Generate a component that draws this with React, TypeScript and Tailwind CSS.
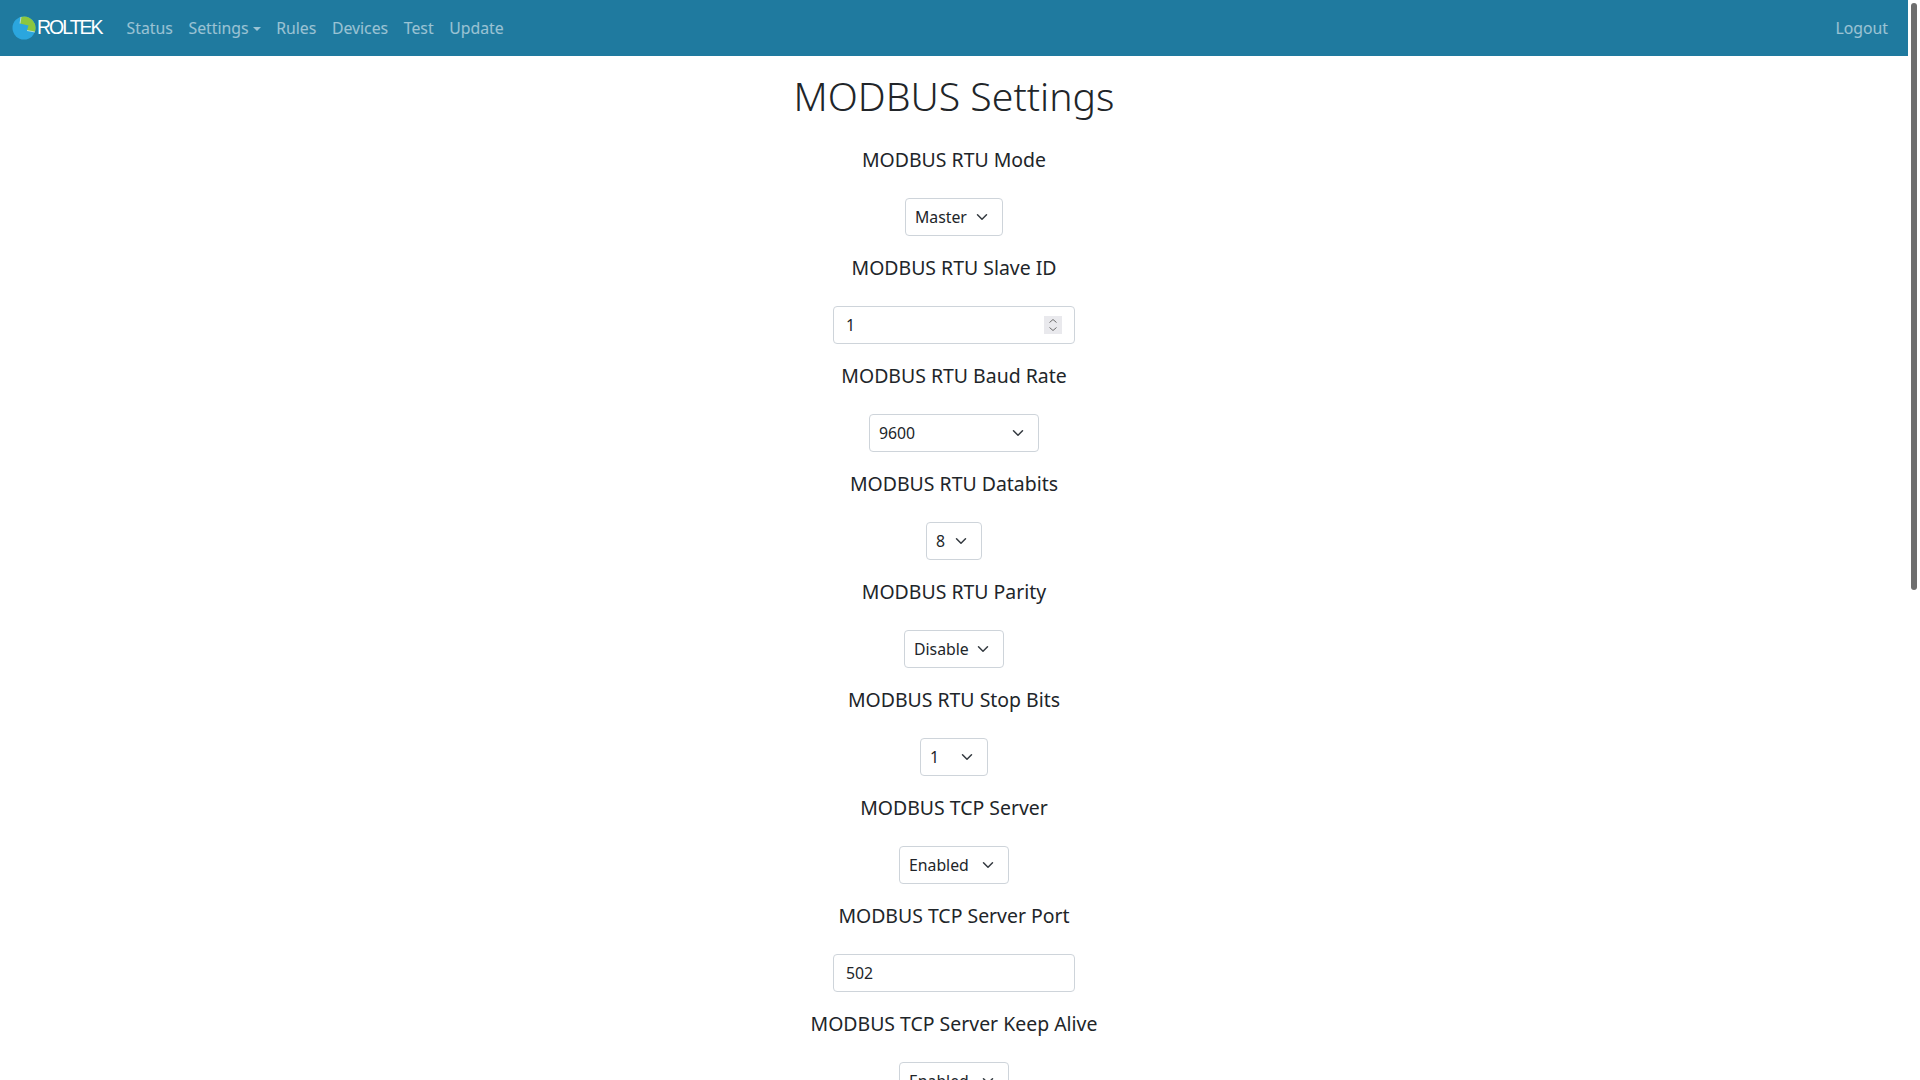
import { ReactNode } from "react";

const FONT = "font-['Noto_Sans',sans-serif]";

function Chevron() {
  return (
    <svg
      viewBox="0 0 16 16"
      className="pointer-events-none absolute right-[15px] top-[13px] h-3 w-3"
      fill="none"
      stroke="#343a40"
      strokeWidth="2"
      strokeLinecap="round"
      strokeLinejoin="round"
    >
      <path d="M2 5l6 6 6-6" />
    </svg>
  );
}

function Select({ value, width }: { value: string; width: string }) {
  return (
    <div className={`relative h-[38px] shrink-0 ${width}`}>
      <div className="h-full w-full rounded-[4px] border border-[#ced4da] bg-white pl-[9px] text-[15.8px] leading-[36px] text-[#212529]">
        {value}
      </div>
      <Chevron />
    </div>
  );
}

function NumberInput({ value, spinner }: { value: string; spinner?: boolean }) {
  return (
    <div className="flex h-[38px] w-[242px] shrink-0 items-center justify-between rounded-[4px] border border-[#ced4da] bg-white px-[12px] text-[15.8px] text-[#212529]">
      <span className="pt-[2px]">{value}</span>
      {spinner && (
        <svg viewBox="0 0 18 18" className="h-[18px] w-[18px] bg-[#e9e9ed]" fill="none" stroke="#6b6b6b" strokeWidth="1">
          <path d="M5.5 6.5 9 3.5l3.5 3M5.5 11.5 9 14.5l3.5-3" />
        </svg>
      )}
    </div>
  );
}

function Field({ label, children }: { label: string; children: ReactNode }) {
  return (
    <div className="flex flex-col items-center">
      <h5 className="mb-[26px] mt-[20px] text-[19.45px] font-normal leading-[24px] text-[#212529]">{label}</h5>
      {children}
    </div>
  );
}

function Logo() {
  return (
    <svg viewBox="0 0 24 24" className="h-6 w-6 shrink-0">
      <circle cx="12" cy="12" r="11.5" fill="#2ba6de" />
      <path d="M9 .9A11.5 11.5 0 0 1 22.8 16L15 14.5 16.5 9.5 8 7.5Z" fill="#8cc63f" />
      <path d="M15 14.5 22.8 16M8 7.5 9 .9" stroke="#d8eef5" strokeWidth="0.7" fill="none" />
    </svg>
  );
}

export default function App() {
  const links = ["Status", "Settings", "Rules", "Devices", "Test", "Update"];

  return (
    <div className={`flex h-screen overflow-hidden bg-white ${FONT}`}>
      <div className="min-w-0 flex-1">
        <nav className="flex h-14 items-center bg-[#1f7a9f] pl-3 pr-5 text-[15.8px]">
          <Logo />
          <span className="ml-[1px] font-['Liberation_Sans',sans-serif] text-[19.5px] tracking-[-2px] text-white">ROLTEK</span>
          <ul className="ml-[25px] flex gap-[15.6px] pt-[2px]">
            {links.map((link) => (
              <li key={link} className="flex items-center text-white/55">
                {link}
                {link === "Settings" && (
                  <span className="ml-[4px] h-0 w-0 border-x-[4px] border-t-[4px] border-x-transparent border-t-white/55" />
                )}
              </li>
            ))}
          </ul>
          <span className="ml-auto pt-[2px] text-white/55">Logout</span>
        </nav>

        <main className="flex flex-col items-center">
          <h1 className="mt-[16px] text-[39.2px] font-light leading-[48px] text-[#212529]">MODBUS Settings</h1>
          <div className="mt-[8px]">
            <Field label="MODBUS RTU Mode"><Select value="Master" width="w-[98px]" /></Field>
          </div>
          <Field label="MODBUS RTU Slave ID"><NumberInput value="1" spinner /></Field>
          <Field label="MODBUS RTU Baud Rate"><Select value="9600" width="w-[170px]" /></Field>
          <Field label="MODBUS RTU Databits"><Select value="8" width="w-[56px]" /></Field>
          <Field label="MODBUS RTU Parity"><Select value="Disable" width="w-[100px]" /></Field>
          <Field label="MODBUS RTU Stop Bits"><Select value="1" width="w-[68px]" /></Field>
          <Field label="MODBUS TCP Server"><Select value="Enabled" width="w-[110px]" /></Field>
          <Field label="MODBUS TCP Server Port"><NumberInput value="502" /></Field>
          <Field label="MODBUS TCP Server Keep Alive"><Select value="Enabled" width="w-[110px]" /></Field>
        </main>
      </div>

      {/* scrollbar */}
      <aside className="w-3 shrink-0 bg-white pl-[3px] pt-[3px]">
        <div className="h-[587px] w-[6px] rounded-[3px] bg-[#6e6e6e]" />
      </aside>
    </div>
  );
}
